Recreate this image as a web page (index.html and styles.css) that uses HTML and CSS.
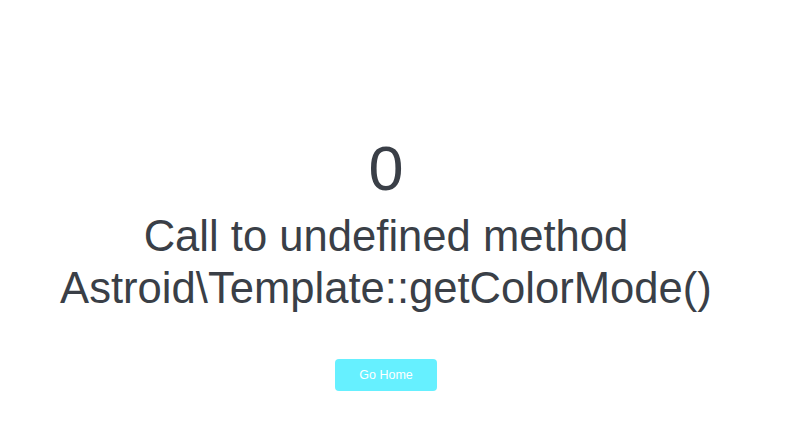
FILE: index.html
```html
<!DOCTYPE html>
<html>
<head>
<meta charset="utf-8">
<link rel="stylesheet" href="styles.css">
</head>
<body>
<main class="page">
  <div class="code">0</div>
  <h1 class="message">Call to undefined method Astroid\Template::getColorMode()</h1>
  <a class="btn" href="#">Go Home</a>
</main>
</body>
</html>
```
FILE: styles.css
```css
html, body {
  margin: 0;
  padding: 0;
  background: #ffffff;
}
body {
  font-family: "Liberation Sans", Arial, sans-serif;
  color: #3a3f47;
}
.page {
  height: 446px;
  display: flex;
  flex-direction: column;
  align-items: center;
  padding-top: 132px;
  padding-right: 28px;
  box-sizing: border-box;
}
.code {
  font-size: 63px;
  line-height: 72px;
}
.message {
  margin: 6px 0 0;
  font-weight: normal;
  font-size: 43.6px;
  line-height: 52px;
  text-align: center;
  width: 700px;
}
.btn {
  margin-top: 45px;
  width: 102px;
  height: 32px;
  display: flex;
  align-items: center;
  justify-content: center;
  background: #66f0ff;
  color: #ffffff;
  border-radius: 4px;
  text-decoration: none;
  font-size: 12.5px;
}
```
